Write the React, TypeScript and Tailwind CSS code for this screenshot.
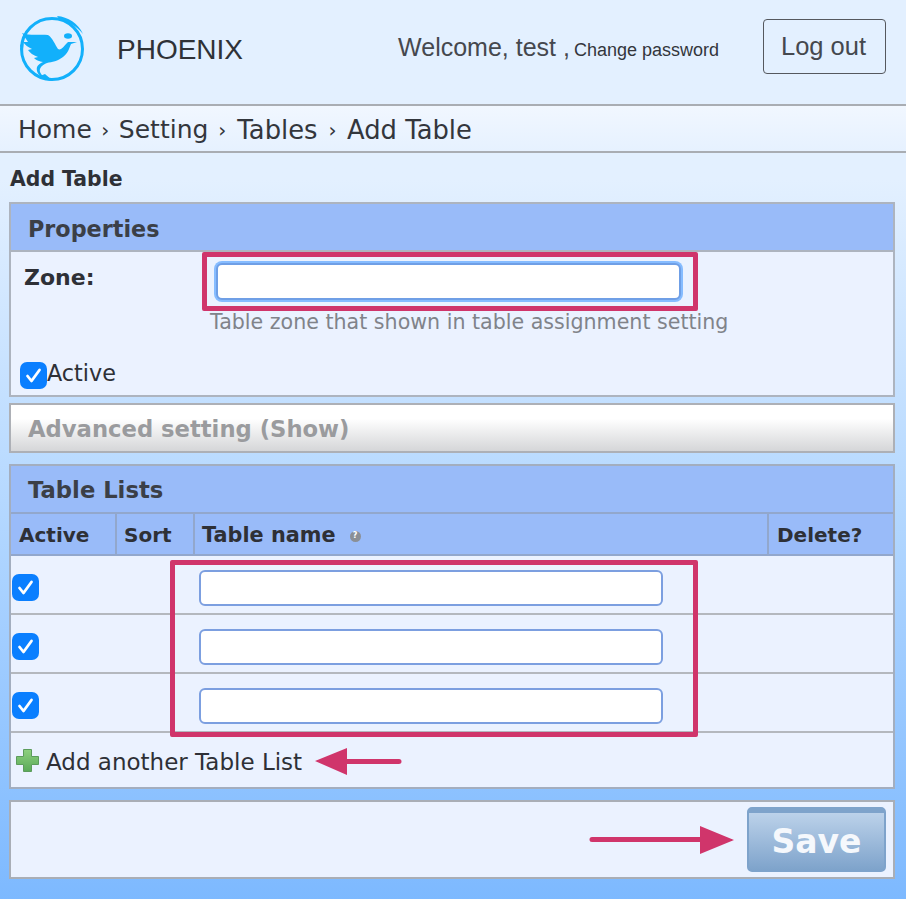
const rows = [1, 2, 3];

function Logo() {
  return (
    <svg width="70" height="70" viewBox="0 0 70 70" className="mb-[6px] shrink-0">
      <circle cx="34" cy="35" r="30.500" fill="none" stroke="#12b0fb" strokeWidth="3" />
      <path d="M39 2 C50 3 60 9 65 20 C59 12 50 8 42 6 Z" fill="#12b0fb" />
      <path d="M22 62 C26 65 30 67 35 67 L27 60 Z" fill="#12b0fb" />
      <path d="M2 32 L6 22 L5 38 Z" fill="#12b0fb" />
      <path
        d="M4 19 C12 22 22 20 30 21 C35 24 37 31 40 35 C43 37 46 32 50 28 L59 28 L53 30 C51 35 50 39 45 43 C40 47 34 48 29 49 C24 51 21 54 22 58 C23 61 26 63 29 65 L25 64 C20 61 18 57 19 53 C20 51 22 49 25 48 C21 47 19 47 16 44 L20 43 C15 41 12 39 10 36 L14 35 C10 33 7 31 5 28 L10 28 C8 25 6 22 4 19 Z"
        fill="#12b0fb"
      />
      <ellipse cx="50" cy="22" rx="4" ry="2.800" fill="#12b0fb" />
    </svg>
  );
}

function CheckBox() {
  return (
    <span className="flex h-[27px] w-[27px] shrink-0 items-center justify-center rounded-[7px] bg-[#0a7fff]">
      <svg width="19" height="19" viewBox="0 0 19 19" fill="none">
        <path d="M3.500 10 L7.500 15 L15.500 4" stroke="#ffffff" strokeWidth="2.800" strokeLinecap="round" strokeLinejoin="round" />
      </svg>
    </span>
  );
}

function PlusIcon() {
  return (
    <svg width="23" height="23" viewBox="0 0 23 23" className="shrink-0">
      <defs>
        <linearGradient id="plus" x1="0" y1="0" x2="0" y2="1">
          <stop offset="0" stopColor="#8ed07f" />
          <stop offset="1" stopColor="#5aaa58" />
        </linearGradient>
      </defs>
      <path
        d="M7.500 0.500 H15.500 V7.500 H22.500 V15.500 H15.500 V22.500 H7.500 V15.500 H0.500 V7.500 H7.500 Z"
        fill="url(#plus)"
        stroke="#5c9c5c"
      />
    </svg>
  );
}

function SectionHead({ label, className }: { label: string; className: string }) {
  return (
    <div className={`flex h-[46px] items-center bg-[#99bbf9] pl-[17px] font-bold text-[#3b3f47] ${className}`}>
      {label}
    </div>
  );
}

export default function App() {
  return (
    <div className="relative h-[899px] w-[906px] overflow-hidden bg-gradient-to-b from-[#e3f0ff] from-20% via-[#bcdcff] via-50% to-[#7db9ff] font-['DejaVu_Sans',sans-serif] text-[#2e3036]">
      <header className="flex h-[104px] items-center pl-[18px] pr-5 font-['Liberation_Sans',sans-serif]">
        <Logo />
        <span className="mb-[4px] ml-[29px] text-[28px] text-[#2f3237]">PHOENIX</span>
        <div className="mb-[9px] ml-auto mr-[44px] flex items-baseline text-[25px] text-[#45484e]">
          <span>Welcome, test ,</span>
          <span className="ml-[4px] text-[18px] text-[#33363c]">Change password</span>
        </div>
        <button className="mb-[12px] h-[55px] w-[123px] rounded-[4px] border border-[#55585e] pr-[2px] text-[25.500px] text-[#45484e]">
          Log out
        </button>
      </header>

      <nav className="flex h-[49px] items-center border-y-2 border-[#a9adb3] bg-gradient-to-b from-[#f1f7ff] to-[#e6f1ff] pl-[18px] pt-[3px] text-[25px] text-[#33363c]">
        <span>Home</span>
        <span className="mx-[9.500px] text-[20px]">›</span>
        <span>Setting</span>
        <span className="ml-[10px] mr-[11px] text-[20px]">›</span>
        <span className="text-[25.800px]">Tables</span>
        <span className="ml-[11px] mr-[10.500px] text-[20px]">›</span>
        <span className="text-[25.800px]">Add Table</span>
      </nav>

      <main className="pl-[9px] pr-[11px]">
        <h1 className="flex h-[49px] items-center pl-[1px] pt-[4px] text-[20.400px] font-bold">Add Table</h1>

        <section className="h-[195px] border-2 border-[#adb4bf] bg-[#ebf2ff]">
          <SectionHead label="Properties" className="pt-[5px] text-[22.300px]" />
          <div className="flex border-t-2 border-[#adb4bf] pt-[11px]">
            <label className="w-[205px] shrink-0 pl-[13px] text-[22px] leading-[30px] font-bold">Zone:</label>
            <div>
              <input
                type="text"
                className="h-[37px] w-[465px] rounded-[6px] border-2 border-[#6f9fe6] bg-white shadow-[0_0_0_2px_#86bcff]"
              />
              <p className="-ml-[6px] mt-[10px] whitespace-nowrap text-[20.600px] leading-[24px] text-[#80838a]">
                Table zone that shown in table assignment setting
              </p>
            </div>
          </div>
          <div className="mt-[27px] flex items-center pl-[9px] text-[22.300px]">
            <CheckBox />
            <span className="-mt-1">Active</span>
          </div>
        </section>

        <div className="mt-[6px] flex h-[50px] items-center border-2 border-[#adb0b6] bg-gradient-to-b from-white from-30% to-[#d5d6d8] pl-[17px] pt-[3px] text-[22.700px] font-bold text-[#9a9b9e]">
          Advanced setting (Show)
        </div>

        <section className="mt-[11px] border-2 border-[#a3aebf] bg-[#ebf2ff]">
          <SectionHead label="Table Lists" className="pt-[3px] text-[22.700px]" />
          <table className="w-full table-fixed border-collapse">
            <thead>
              <tr className="h-[42px] border-y-2 border-[#92a7cc] bg-[#99bbf9] text-left text-[20px] font-bold">
                <th className="w-[105px] border-r-2 border-[#92a7cc] pl-[8px] pt-[2px]">Active</th>
                <th className="w-[78px] border-r-2 border-[#92a7cc] pl-[7px] pt-[2px]">Sort</th>
                <th className="border-r-2 border-[#92a7cc] pl-[7px] pt-[4px]">
                  <span className="flex items-center text-[20.800px]">
                    Table name
                    <span className="ml-[14px] flex h-[11px] w-[11px] items-center justify-center rounded-full bg-[#8b8f96] text-[8px] leading-none text-white">?</span>
                  </span>
                </th>
                <th className="w-[125px] pl-[8px] pt-[2px]">Delete?</th>
              </tr>
            </thead>
            <tbody>
              {rows.map((row) => (
                <tr key={row} className="h-[59px] border-b-2 border-[#b4b8be]">
                  <td className="pl-[1px] pt-[6px]">
                    <CheckBox />
                  </td>
                  <td />
                  <td className="pl-[5px] pt-[6px]">
                    <input
                      type="text"
                      className="block h-[36px] w-[464px] rounded-[6px] border-2 border-[#7c9fe0] bg-white"
                    />
                  </td>
                  <td />
                </tr>
              ))}
            </tbody>
          </table>
          <div className="flex h-[54px] items-center pl-[5px] text-[23px]">
            <PlusIcon />
            <span className="ml-[7px] mt-[4px]">Add another Table List</span>
          </div>
        </section>

        <section className="mt-[11px] flex h-[79px] items-center justify-end border-2 border-[#a9aeb6] bg-[#ebf2ff] pr-[7px]">
          <button className="h-[65px] w-[139px] rounded-[5px] border-2 border-t-[6px] border-[#7ea3cb] bg-gradient-to-b from-[#bcd2ea] to-[#7ea3cb] text-[33px] font-bold text-[#f5f8fc]">
            Save
          </button>
        </section>
      </main>

      {/* annotations drawn on top of the screenshot */}
      <div className="absolute left-[202px] top-[252px] h-[59px] w-[496px] rounded-[2px] border-[5px] border-[#d0356b]" />
      <div className="absolute left-[170px] top-[560px] h-[177px] w-[528px] rounded-[2px] border-[5px] border-[#d0356b]" />
      <svg className="absolute left-[314px] top-[746px]" width="88" height="30" viewBox="0 0 88 30">
        <path d="M1 15 L33 2 L33 13 L85 13 A2 2 0 0 1 85 18 L33 18 L33 29 Z" fill="#d0356b" />
      </svg>
      <svg className="absolute left-[589px] top-[825px]" width="146" height="30" viewBox="0 0 146 30">
        <path d="M145 15 L111 1 L111 12 L3 12 A2 2 0 0 0 3 17 L111 17 L111 29 Z" fill="#d0356b" />
      </svg>
    </div>
  );
}
